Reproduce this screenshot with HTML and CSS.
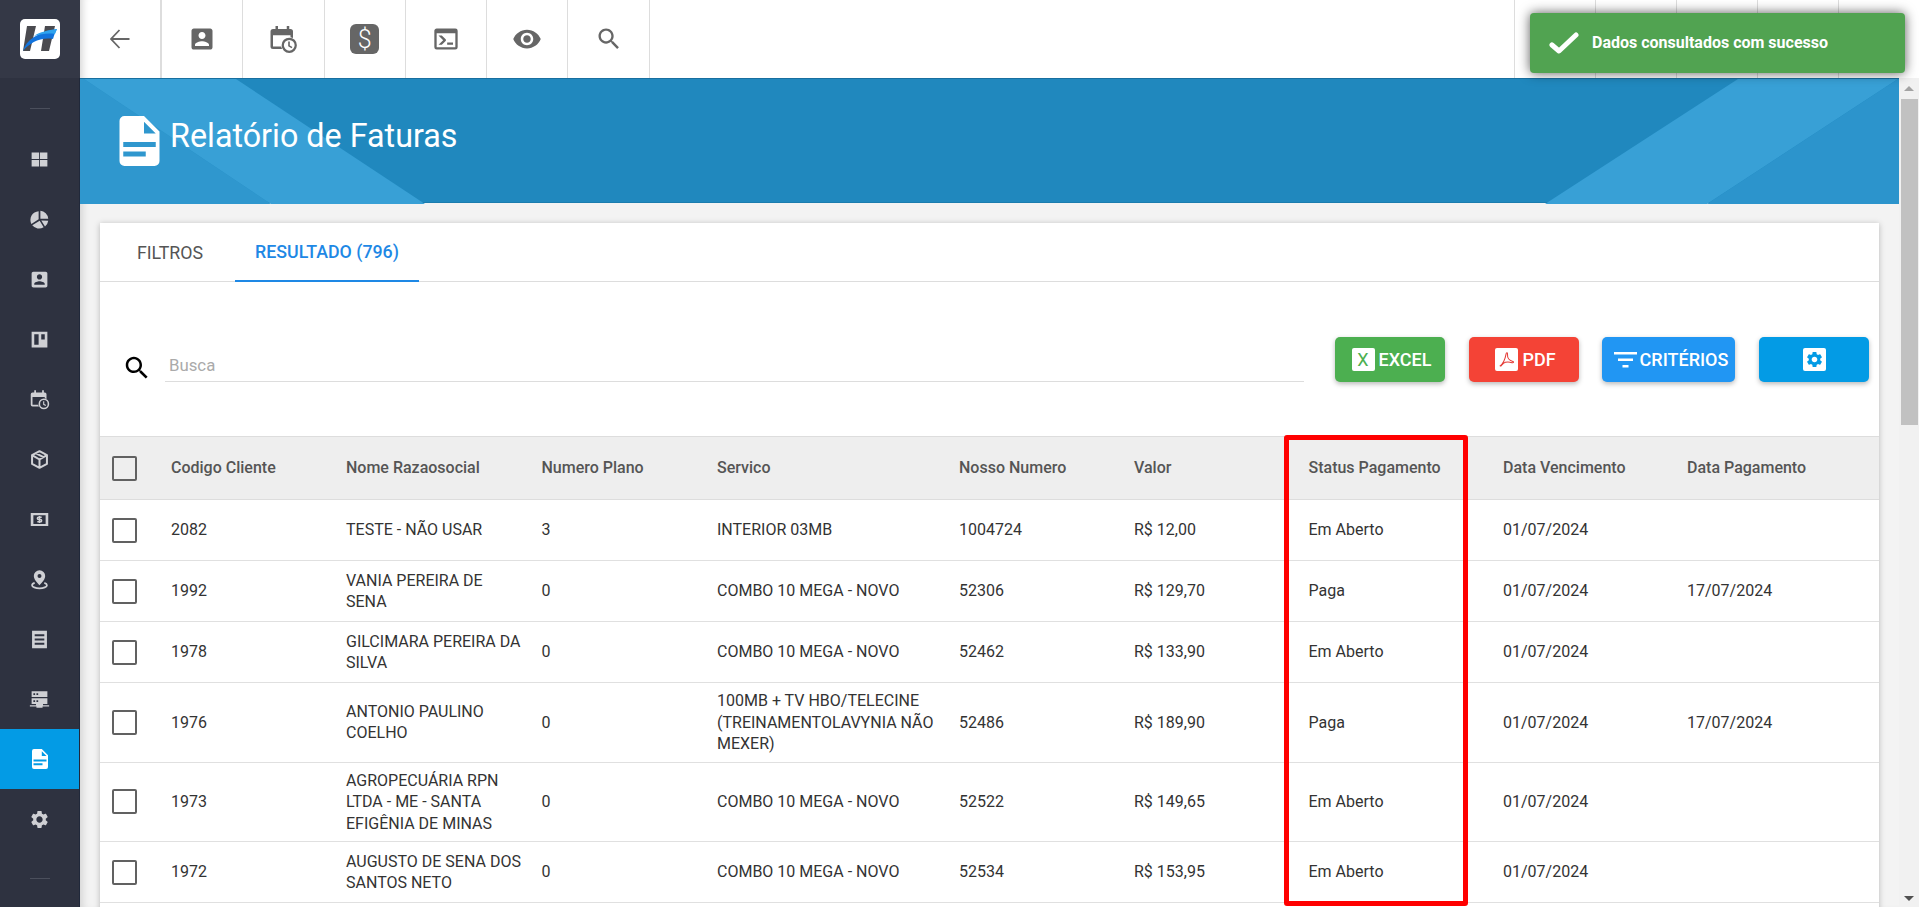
FILE: index.html
```html
<!DOCTYPE html>
<html lang="pt-BR">
<head>
  <meta charset="UTF-8" />
  <meta name="viewport" content="width=device-width, initial-scale=1.0" />
  <title>Relatório de Faturas</title>
  <link rel="stylesheet" href="styles.css">
</head>
<body>
  <svg class="sprite" xmlns="http://www.w3.org/2000/svg">
    <symbol id="i-contact" viewBox="0 0 24 24"><path d="M3 5v14c0 1.1.89 2 2 2h14c1.1 0 2-.9 2-2V5c0-1.1-.9-2-2-2H5c-1.11 0-2 .9-2 2zm12 4c0 1.66-1.34 3-3 3s-3-1.34-3-3 1.34-3 3-3 3 1.34 3 3zm-9 8c0-2 4-3.1 6-3.1s6 1.1 6 3.1v1H6v-1z"/></symbol>
    <symbol id="i-calendar" viewBox="0 0 24 24"><path fill-rule="evenodd" d="M6 1.500h2V4h7V1.500h2V4h1a2 2 0 0 1 2 2v12a2 2 0 0 1-2 2H4a2 2 0 0 1-2-2V6a2 2 0 0 1 2-2h2zM4 9v9h14V9z"/><circle cx="17" cy="17" r="6.500" style="fill:var(--cut)"/><circle cx="17" cy="17" r="5.200" fill="none" stroke="currentColor" stroke-width="1.800"/><path d="M16.800 14v3.500l2.400 1.400" fill="none" stroke="currentColor" stroke-width="1.300"/></symbol>
    <symbol id="i-terminal" viewBox="0 0 24 24"><path d="M20 19V7H4v12h16M20 3a2 2 0 0 1 2 2v14a2 2 0 0 1-2 2H4a2 2 0 0 1-2-2V5c0-1.110.9-2 2-2h16m-7 14v-2h5v2h-5m-3.420-4L5.570 9H8.400l3.300 3.300c.39.39.39 1.030 0 1.420L8.420 17H5.590l3.990-4z"/></symbol>
    <symbol id="i-eye" viewBox="0 0 24 24"><path d="M12 4.500C7 4.500 2.730 7.610 1 12c1.730 4.390 6 7.500 11 7.500s9.270-3.110 11-7.500c-1.730-4.390-6-7.500-11-7.500zM12 17c-2.760 0-5-2.240-5-5s2.240-5 5-5 5 2.240 5 5-2.240 5-5 5zm0-8c-1.660 0-3 1.340-3 3s1.340 3 3 3 3-1.340 3-3-1.340-3-3-3z"/></symbol>
    <symbol id="i-search" viewBox="0 0 24 24"><path d="M15.500 14h-.79l-.28-.27C15.410 12.590 16 11.110 16 9.500 16 5.910 13.090 3 9.500 3S3 5.910 3 9.500 5.910 16 9.500 16c1.610 0 3.090-.59 4.230-1.570l.27.28v.79l5 4.990L20.490 19l-4.990-5zm-6 0C7.010 14 5 11.990 5 9.500S7.010 5 9.500 5 14 7.010 14 9.500 11.990 14 9.500 14z"/></symbol>
    <symbol id="i-grid" viewBox="0 0 24 24"><path d="M3 4h8.500v7.500H3zM12.500 4H21v7.500h-8.500zM3 12.500h8.500V20H3zM12.500 12.500H21V20h-8.500z"/></symbol>
    <symbol id="i-pie" viewBox="0 0 24 24"><path d="M11 2.500v9.300l-8.300 5.200A10 10 0 0 1 11 2.500zM13 2a10 10 0 0 1 9 9h-9zM3.700 18.700l8.500-5.300 4.500 7.500A10 10 0 0 1 3.700 18.700zM14 13.200l8 .3a10 10 0 0 1-3.700 6.500z"/></symbol>
    <symbol id="i-kanban" viewBox="0 0 24 24"><path fill-rule="evenodd" d="M3 3h18v18H3zM6 6v12h5V6zM14 6v6h4V6z"/></symbol>
    <symbol id="i-box" viewBox="0 0 24 24"><path d="M12 2.500 20.500 7v10L12 21.500 3.500 17V7zM3.500 7 12 12l8.500-5M12 12v9.500M7.500 4.800l9 4.600" fill="none" stroke="currentColor" stroke-width="2.300" stroke-linejoin="round"/></symbol>
    <symbol id="i-money" viewBox="0 0 24 24"><path fill-rule="evenodd" d="M2 4.500h20v15H2zM5 7v10h14V7z"/><path d="M14.500 9.300h-3.600a1.300 1.300 0 0 0 0 2.700h2.200a1.300 1.300 0 0 1 0 2.700H9.500M12 8v8" fill="none" stroke="currentColor" stroke-width="1.700"/></symbol>
    <symbol id="i-pin" viewBox="0 0 24 24"><path fill-rule="evenodd" d="M12 1.500a6.500 6.500 0 0 1 6.500 6.500c0 4.600-6.500 10.500-6.500 10.500S5.500 12.600 5.500 8A6.500 6.500 0 0 1 12 1.500zM12 5.700a2.300 2.300 0 1 0 0 4.600 2.300 2.300 0 0 0 0-4.600z"/><path d="M6.500 15.800c-1.800.6-3 1.500-3 2.700 0 1.900 3.800 3.500 8.500 3.500s8.500-1.600 8.500-3.500c0-1.200-1.200-2.100-3-2.700" fill="none" stroke="currentColor" stroke-width="2"/></symbol>
    <symbol id="i-receipt" viewBox="0 0 24 24"><path fill-rule="evenodd" d="M3.500 2h17v20h-17zM6.500 6v2.400h11V6zM6.500 10.800v2.400h11v-2.400zM6.500 15.600V18h11v-2.400z"/></symbol>
    <symbol id="i-server" viewBox="0 0 24 24"><path fill-rule="evenodd" d="M3 2.500h18v6.500H3zM5 4.800v2h2v-2zM8.500 4.800v2h2v-2zM3 10.500h18V17h-5v1.500h7V20h-7.500v1.500h-7V20H1v-1.500h7V17H3zM5 12.800v2h2v-2zM8.500 12.800v2h2v-2z"/></symbol>
    <symbol id="i-doc" viewBox="4 2 16 20"><path fill-rule="evenodd" d="M6 2h7.800L20 8.200V20a2 2 0 0 1-2 2H6a2 2 0 0 1-2-2V4a2 2 0 0 1 2-2zM13.800 4.300V9H18.500zM5.500 12.400v2h13v-2zM5.500 16.200v2h9v-2z"/></symbol>
    <symbol id="i-gear" viewBox="0 0 24 24"><path d="M19.140 12.940c.04-.3.06-.61.06-.94 0-.32-.02-.64-.07-.94l2.030-1.580c.18-.14.23-.41.12-.61l-1.920-3.320c-.12-.22-.37-.29-.59-.22l-2.390.96c-.5-.38-1.030-.7-1.620-.94l-.36-2.540c-.04-.24-.24-.41-.48-.41h-3.840c-.24 0-.43.17-.47.41l-.36 2.540c-.59.24-1.130.57-1.620.94l-2.390-.96c-.22-.08-.47 0-.59.22L2.740 8.870c-.12.21-.08.47.12.61l2.030 1.580c-.05.3-.09.63-.09.94s.02.64.07.94l-2.030 1.580c-.18.14-.23.41-.12.61l1.920 3.320c.12.22.37.29.59.22l2.390-.96c.5.38 1.030.7 1.620.94l.36 2.540c.05.24.24.41.48.41h3.840c.24 0 .44-.17.47-.41l.36-2.540c.59-.24 1.130-.56 1.620-.94l2.390.96c.22.08.47 0 .59-.22l1.920-3.320c.12-.22.07-.47-.12-.61l-2.010-1.580zM12 15.600c-1.980 0-3.600-1.620-3.600-3.600s1.620-3.600 3.600-3.600 3.600 1.620 3.600 3.600-1.620 3.600-3.600 3.600z"/></symbol>
  </svg>

  <header class="topbar">
    <div class="logo-cell">
      <svg class="logo" viewBox="0 0 40 40">
        <rect width="40" height="40" rx="5" fill="#fff"/>
        <path d="M7 7h9l-6 25H3z M25 7h10l-6 25h-8z" fill="#4a4a4f"/>
        <path d="M3 32C6 21 18 13 37 10c-2 3-3 7-4 10C20 18 10 24 3 32z" fill="#1273dc"/>
        <path d="M14 17C20 13 28 11 37 10l-2 5c-7-1-14 0-21 2z" fill="#2fa3ee"/>
      </svg>
    </div>
    <div class="tool-cell first">
      <svg class="back-icon" viewBox="0 0 20 20"><path d="M19.500 10H1M9.500 1 1 10l8.500 9" fill="none" stroke="currentColor" stroke-width="1.800"/></svg>
    </div>
    <div class="tool-cell"><svg class="tool-icon"><use href="#i-contact"/></svg></div>
    <div class="tool-cell"><svg class="tool-icon big"><use href="#i-calendar"/></svg></div>
    <div class="tool-cell"><span class="dollar-icon">$</span></div>
    <div class="tool-cell"><svg class="tool-icon"><use href="#i-terminal"/></svg></div>
    <div class="tool-cell"><svg class="tool-icon big"><use href="#i-eye"/></svg></div>
    <div class="tool-cell"><svg class="tool-icon"><use href="#i-search"/></svg></div>
    <div class="tool-spacer"></div>
    <div class="tool-cell right"></div>
    <div class="tool-cell right"></div>
    <div class="tool-cell right"></div>
    <div class="tool-cell right"></div>
    <div class="tool-cell right"></div>
  </header>

  <div class="toast">
    <svg class="toast-check" viewBox="0 0 30 22"><path d="M3 13l7 6L27 3" fill="none" stroke="#fff" stroke-width="5" stroke-linecap="round" stroke-linejoin="round"/></svg>
    <span>Dados consultados com sucesso</span>
  </div>

  <div class="layout">
    <nav class="sidebar">
      <div class="side-rule"></div>
      <a class="side-item"><svg><use href="#i-grid"/></svg></a>
      <a class="side-item"><svg><use href="#i-pie"/></svg></a>
      <a class="side-item"><svg><use href="#i-contact"/></svg></a>
      <a class="side-item"><svg><use href="#i-kanban"/></svg></a>
      <a class="side-item"><svg><use href="#i-calendar"/></svg></a>
      <a class="side-item"><svg><use href="#i-box"/></svg></a>
      <a class="side-item"><svg><use href="#i-money"/></svg></a>
      <a class="side-item"><svg><use href="#i-pin"/></svg></a>
      <a class="side-item"><svg><use href="#i-receipt"/></svg></a>
      <a class="side-item"><svg><use href="#i-server"/></svg></a>
      <a class="side-item active"><svg class="side-doc"><use href="#i-doc"/></svg></a>
      <a class="side-item"><svg><use href="#i-gear"/></svg></a>
      <div class="side-rule"></div>
    </nav>

    <main class="main">
      <section class="banner">
        <svg class="banner-art" width="1819" height="125">
          <polygon points="0,0 4,0 191,125 0,125" fill="#2f97ce"/>
          <polygon points="4,0 156,0 345,125 191,125" fill="#38a0d6"/>
          <polygon points="1658,0 1818,0 1627,125 1465,125" fill="#38a0d6"/>
          <polygon points="1818,0 1819,0 1819,125 1627,125" fill="#2c94cc"/>
        </svg>
        <svg class="banner-icon"><use href="#i-doc"/></svg>
        <h1>Relatório de Faturas</h1>
      </section>

      <section class="card">
        <div class="tabs">
          <div class="tab">FILTROS</div>
          <div class="tab active">RESULTADO (796)</div>
        </div>

        <div class="table-tools">
          <svg class="search-icon"><use href="#i-search"/></svg>
          <div class="search-box">Busca</div>
          <button class="btn btn-excel"><span class="btn-badge excel-x">X</span>EXCEL</button>
          <button class="btn btn-pdf"><span class="btn-badge">
            <svg viewBox="0 0 24 24"><path d="M4 20c3-2 6-7 7.500-15 .3-2 2-2 1.800.5C13 9 15 13 20 14.500c1.500.5 1 2-1 1.500-4-1-9-.5-11 1-1.500 1.500-3 4-4 3z" fill="none" stroke="#e53935" stroke-width="1.300"/></svg>
          </span>PDF</button>
          <button class="btn btn-filter">
            <svg class="filter-icon" viewBox="0 0 23 16"><path d="M0 0h23v2.500H0zM4 6.500h15V9H4zM8.500 13h6v2.500h-6z" fill="#fff"/></svg>CRITÉRIOS</button>
          <button class="btn btn-config"><span class="btn-badge"><svg class="config-gear"><use href="#i-gear"/></svg></span></button>
        </div>

        <table class="result-table">
          <colgroup>
            <col class="c-check"><col class="c-code"><col class="c-name"><col class="c-plan"><col class="c-service">
            <col class="c-number"><col class="c-value"><col class="c-status"><col class="c-due"><col class="c-paid">
          </colgroup>
          <thead>
            <tr>
              <th><span class="check"></span></th>
              <th>Codigo Cliente</th>
              <th>Nome Razaosocial</th>
              <th>Numero Plano</th>
              <th>Servico</th>
              <th>Nosso Numero</th>
              <th>Valor</th>
              <th>Status Pagamento</th>
              <th>Data Vencimento</th>
              <th>Data Pagamento</th>
            </tr>
          </thead>
          <tbody>
            <tr>
              <td><span class="check"></span></td>
              <td>2082</td><td>TESTE - NÃO USAR</td><td>3</td><td>INTERIOR 03MB</td>
              <td>1004724</td><td>R$ 12,00</td><td>Em Aberto</td><td>01/07/2024</td><td></td>
            </tr>
            <tr>
              <td><span class="check"></span></td>
              <td>1992</td><td>VANIA PEREIRA DE SENA</td><td>0</td><td>COMBO 10 MEGA - NOVO</td>
              <td>52306</td><td>R$ 129,70</td><td>Paga</td><td>01/07/2024</td><td>17/07/2024</td>
            </tr>
            <tr>
              <td><span class="check"></span></td>
              <td>1978</td><td>GILCIMARA PEREIRA DA SILVA</td><td>0</td><td>COMBO 10 MEGA - NOVO</td>
              <td>52462</td><td>R$ 133,90</td><td>Em Aberto</td><td>01/07/2024</td><td></td>
            </tr>
            <tr>
              <td><span class="check"></span></td>
              <td>1976</td><td>ANTONIO PAULINO COELHO</td><td>0</td><td>100MB + TV HBO/TELECINE (TREINAMENTOLAVYNIA NÃO MEXER)</td>
              <td>52486</td><td>R$ 189,90</td><td>Paga</td><td>01/07/2024</td><td>17/07/2024</td>
            </tr>
            <tr>
              <td><span class="check"></span></td>
              <td>1973</td><td>AGROPECUÁRIA RPN LTDA - ME - SANTA EFIGÊNIA DE MINAS</td><td>0</td><td>COMBO 10 MEGA - NOVO</td>
              <td>52522</td><td>R$ 149,65</td><td>Em Aberto</td><td>01/07/2024</td><td></td>
            </tr>
            <tr>
              <td><span class="check"></span></td>
              <td>1972</td><td>AUGUSTO DE SENA DOS SANTOS NETO</td><td>0</td><td>COMBO 10 MEGA - NOVO</td>
              <td>52534</td><td>R$ 153,95</td><td>Em Aberto</td><td>01/07/2024</td><td></td>
            </tr>
          </tbody>
        </table>

        <div class="highlight-box"></div>
      </section>
    </main>

    <div class="scrollbar">
      <span class="arrow up"></span>
      <div class="scroll-thumb"></div>
      <span class="arrow down"></span>
    </div>
  </div>
</body>
</html>
```

FILE: styles.css
```css
* {
  box-sizing: border-box;
}
html, body {
  margin: 0;
  height: 100%;
  overflow: hidden;
}
body {
  display: flex;
  flex-direction: column;
  position: relative;
  font-family: Roboto, "Liberation Sans", sans-serif;
  font-size: 16px;
  color: #333;
  background: #f3f3f3;
}
.sprite {
  display: none;
}

/* top bar */
.topbar {
  display: flex;
  flex: 0 0 78px;
  background: #fff;
  color: #666;
  --cut: #fff;
}
.logo-cell {
  flex: 0 0 80px;
  display: flex;
  align-items: center;
  justify-content: center;
  background: #343846;
}
.logo {
  width: 40px;
  height: 40px;
}
.tool-cell {
  flex: 0 0 81.3px;
  display: flex;
  align-items: center;
  justify-content: center;
  border-right: 1px solid #ddd;
}
.tool-cell.first {
  flex-basis: 82px;
  border-right-width: 2px;
  box-shadow: inset 10px 0 8px -8px rgba(0,0,0,0.18);
}
.tool-cell.right {
  flex-basis: 81px;
  border-right: none;
  border-left: 1px solid #ddd;
}
.tool-spacer {
  flex: 1;
}
.tool-icon {
  width: 28px;
  height: 28px;
  fill: currentColor;
}
.tool-icon.big {
  width: 30px;
  height: 30px;
}
.back-icon {
  width: 20px;
  height: 20px;
}
.dollar-icon {
  display: flex;
  align-items: center;
  justify-content: center;
  width: 29px;
  height: 30px;
  border-radius: 6px;
  background: #666;
  color: #fff;
  font-size: 25px;
  font-weight: 300;
}

/* toast */
.toast {
  position: absolute;
  top: 13px;
  right: 14px;
  z-index: 10;
  display: flex;
  align-items: center;
  width: 375px;
  height: 60px;
  padding: 0 0 1px 19px;
  border-radius: 4px;
  background: #51a351;
  color: #fff;
  font-size: 16px;
  font-weight: 700;
  box-shadow: 0 0 12px rgba(0,0,0,0.65);
}
.toast-check {
  width: 30px;
  height: 22px;
  margin-right: 13px;
}

/* layout */
.layout {
  flex: 1;
  display: flex;
  min-height: 0;
}
.sidebar {
  flex: 0 0 80px;
  padding-top: 30px;
  background: #2e3240;
  border-right: 1px solid #20283a;
  color: #cfd0d4;
  --cut: #2e3240;
}
.side-rule {
  width: 20px;
  height: 1px;
  margin: 0 auto 20px;
  background: #4b4f5c;
}
.side-rule:last-child {
  margin-top: 29px;
}
.side-item {
  display: flex;
  align-items: center;
  justify-content: center;
  height: 60px;
}
.side-item svg {
  width: 21px;
  height: 21px;
  fill: currentColor;
}
.side-item .side-doc {
  width: 16px;
  height: 20px;
}
.side-item.active {
  background: #039be5;
  color: #fff;
}

.main {
  flex: 1;
  min-width: 0;
  overflow: hidden;
  box-shadow: inset 8px 0 8px -6px rgba(0,0,0,0.15);
}

/* banner */
.banner {
  position: relative;
  display: flex;
  align-items: center;
  height: 125px;
  padding-left: 39px;
  background: #2088be;
  border-top: 1px solid #186f9f;
  border-bottom: 1px solid #1b7cae;
  color: #fff;
}
.banner-art {
  position: absolute;
  top: 0;
  left: 0;
}
.banner-icon {
  position: relative;
  width: 41px;
  height: 50px;
  margin-right: 10px;
  fill: #fff;
}
.banner h1 {
  position: relative;
  margin: 0 0 10px;
  font-size: 32.3px;
  font-weight: 400;
}

/* card */
.card {
  position: relative;
  min-height: 700px;
  margin: 20px 20px 0;
  background: #fff;
  box-shadow: 0 1px 6px rgba(0,0,0,0.25);
}
.tabs {
  display: flex;
  height: 59px;
  padding-left: 5px;
  border-bottom: 1px solid #ddd;
}
.tab {
  display: flex;
  align-items: center;
  justify-content: center;
  width: 130px;
  height: 58px;
  color: #555;
  font-size: 17.8px;
}
.tab.active {
  width: 184px;
  color: #1e88e5;
  font-weight: 500;
  border-bottom: 2px solid #1e88e5;
  height: 59px;
}
.table-tools {
  display: flex;
  align-items: flex-start;
  height: 154px;
  padding: 55px 10px 0 22px;
}
.search-icon {
  flex: none;
  width: 30px;
  height: 30px;
  margin: 16px 13px 0 0;
  fill: #000;
}
.search-box {
  flex: 1;
  height: 45px;
  margin-right: 31px;
  padding: 18px 4px 0;
  border-bottom: 1px solid #ddd;
  color: #aaa;
  font-size: 16.8px;
}
.btn {
  flex: none;
  display: flex;
  align-items: center;
  justify-content: center;
  width: 110px;
  height: 45px;
  margin-right: 24px;
  padding: 0 0 0 3px;
  border: none;
  border-radius: 5px;
  color: #fff;
  font-family: inherit;
  font-size: 18px;
  font-weight: 500;
  box-shadow: 0 2px 5px rgba(0,0,0,0.28);
}
.btn-excel {
  background: #4caf50;
}
.btn-pdf {
  margin-right: 23px;
  background: #f44336;
}
.btn-filter {
  width: 133px;
  padding-left: 5px;
  background: #2196f3;
}
.btn-config {
  margin-right: 0;
  padding-left: 0;
  background: #039be5;
}
.btn-badge {
  display: flex;
  align-items: center;
  justify-content: center;
  width: 23px;
  height: 23px;
  margin-right: 4px;
  border-radius: 2px;
  background: #fff;
}
.btn-config .btn-badge {
  margin-right: 0;
}
.excel-x {
  color: #4caf50;
  font-weight: 400;
}
.btn-badge svg {
  width: 19px;
  height: 19px;
}
.config-gear {
  fill: #039be5;
}
.filter-icon {
  width: 23px;
  height: 16px;
  margin-right: 3px;
}

/* table */
.result-table {
  width: 100%;
  border-collapse: collapse;
  table-layout: fixed;
  line-height: 21.5px;
}
.c-check { width: 71px; }
.c-code { width: 175px; }
.c-name { width: 195.5px; }
.c-plan { width: 175.5px; }
.c-service { width: 242px; }
.c-number { width: 175px; }
.c-value { width: 174.5px; }
.c-status { width: 194.5px; }
.c-due { width: 184px; }
.result-table th {
  height: 63px;
  padding: 0;
  background: #eee;
  border-top: 1px solid #ddd;
  border-bottom: 1px solid #ddd;
  color: #555;
  font-weight: 500;
  text-align: left;
}
.result-table td {
  height: 61px;
  padding: 7px 19px 7px 0;
  border-bottom: 1px solid #e0e0e0;
}
.result-table th:first-child, .result-table td:first-child {
  padding: 0 0 0 12px;
}
.check {
  display: block;
  width: 25px;
  height: 25px;
  border: 2px solid #616161;
  border-radius: 2px;
}
.highlight-box {
  position: absolute;
  top: 212px;
  left: 1184px;
  width: 184px;
  height: 471px;
  border: 5px solid #f00;
  border-radius: 3px;
}

/* scrollbar */
.scrollbar {
  position: relative;
  flex: 0 0 20px;
  padding: 21px 1px 0 2px;
  background: #f1f1f1;
}
.scroll-thumb {
  height: 326px;
  background: #c1c1c1;
}
.arrow {
  position: absolute;
  left: 5px;
  width: 0;
  height: 0;
  border-left: 5px solid transparent;
  border-right: 5px solid transparent;
}
.arrow.up {
  top: 8px;
  border-bottom: 5px solid #a3a3a3;
}
.arrow.down {
  bottom: 6px;
  border-top: 5px solid #505050;
}
```
